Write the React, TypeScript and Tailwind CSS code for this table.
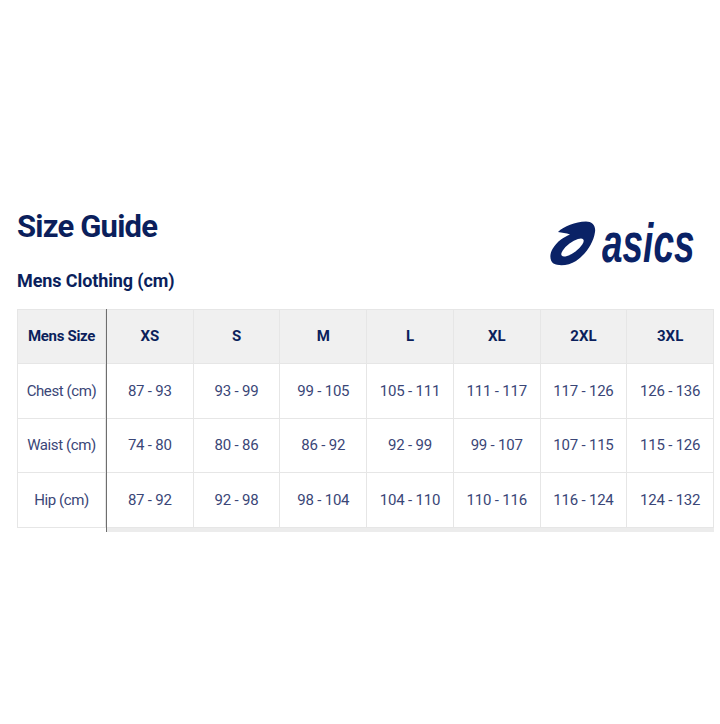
import React from 'react';

const sizes = ['XS', 'S', 'M', 'L', 'XL', '2XL', '3XL'];

const rows = [
  { label: 'Chest (cm)', values: ['87 - 93', '93 - 99', '99 - 105', '105 - 111', '111 - 117', '117 - 126', '126 - 136'] },
  { label: 'Waist (cm)', values: ['74 - 80', '80 - 86', '86 - 92', '92 - 99', '99 - 107', '107 - 115', '115 - 126'] },
  { label: 'Hip (cm)', values: ['87 - 92', '92 - 98', '98 - 104', '104 - 110', '110 - 116', '116 - 124', '124 - 132'] },
];

function AsicsLogo() {
  return (
    <div className="flex items-start">
      <svg width="60" height="60" viewBox="0 0 60 60" className="shrink-0">
        {/* stripe */}
        <path
          d="M16,14 C22,8 33,4 44,3.5 C50,3.5 54,7.5 53,14 C51.5,25 44,36 34,43 C27,47.5 17,48.5 11.5,45.5 C7.5,42.5 7.5,36 10.5,31 C12.5,27.5 15.5,24 19,21.5 C22,19.5 25,17.5 28,16.5 C24,15 20,14.5 16,14 Z"
          fill="#0a2266"
        />
        <ellipse cx="30.5" cy="29.5" rx="13.5" ry="5" transform="rotate(-37 30.5 29.5)" fill="#ffffff" />
      </svg>
      <span
        className="mt-[-3px] origin-left scale-x-[0.66] text-[56px] font-bold italic leading-none text-[#0a2266]"
        style={{ fontFamily: '"Liberation Sans", Arial, sans-serif' }}
      >
        asics
      </span>
    </div>
  );
}

export default function App() {
  return (
    <div className="min-h-[724px] w-[720px] overflow-hidden bg-white" style={{ fontFamily: 'Roboto, "Noto Sans", sans-serif' }}>
      <div className="pl-[17px] pt-[211px]">
        <div className="flex items-start justify-between">
          <div>
            <h1 className="text-[31px] font-bold leading-none tracking-[-0.8px] text-[#0b1f5c]">Size Guide</h1>
            <h2 className="mt-[30px] text-[18px] font-bold leading-none tracking-[-0.1px] text-[#0b1f5c]">Mens Clothing (cm)</h2>
          </div>
          <div className="mt-[7px] w-[178px]">
            <AsicsLogo />
          </div>
        </div>

        {/* table */}
        <div className="mt-[19px] flex w-[697px]">
          <div className="w-[89px] shrink-0">
            <div className="flex h-[55px] items-center justify-center border border-[#e6e6e6] bg-[#f0f0f0] text-[15px] font-bold tracking-[-0.3px] text-[#0b1f5c]">
              Mens Size
            </div>
            {rows.map((r, i) => (
              <div
                key={r.label}
                className={`flex items-center justify-center border-x border-b border-[#e6e6e6] text-[15px] tracking-[-0.4px] text-[#3a4677] ${i === 1 ? 'h-[54px]' : 'h-[55px]'}`}
              >
                {r.label}
              </div>
            ))}
          </div>
          <div className="flex-1 border-l border-[#6e6e6e]">
            <div className="grid grid-cols-7">
              {sizes.map((s) => (
                <div
                  key={s}
                  className="flex h-[55px] items-center justify-center border-y border-r border-[#e6e6e6] bg-[#f0f0f0] text-[15px] font-bold text-[#0b1f5c]"
                >
                  {s}
                </div>
              ))}
              {rows.map((r, i) =>
                r.values.map((v) => (
                  <div
                    key={r.label + v}
                    className={`flex items-center justify-center border-b border-r border-[#e6e6e6] text-[15px] tracking-[-0.2px] text-[#3a4677] ${i === 1 ? 'h-[54px]' : 'h-[55px]'}`}
                  >
                    {v}
                  </div>
                ))
              )}
            </div>
            <div className="h-[4px] bg-[#ececec]" />
          </div>
        </div>
      </div>
    </div>
  );
}
